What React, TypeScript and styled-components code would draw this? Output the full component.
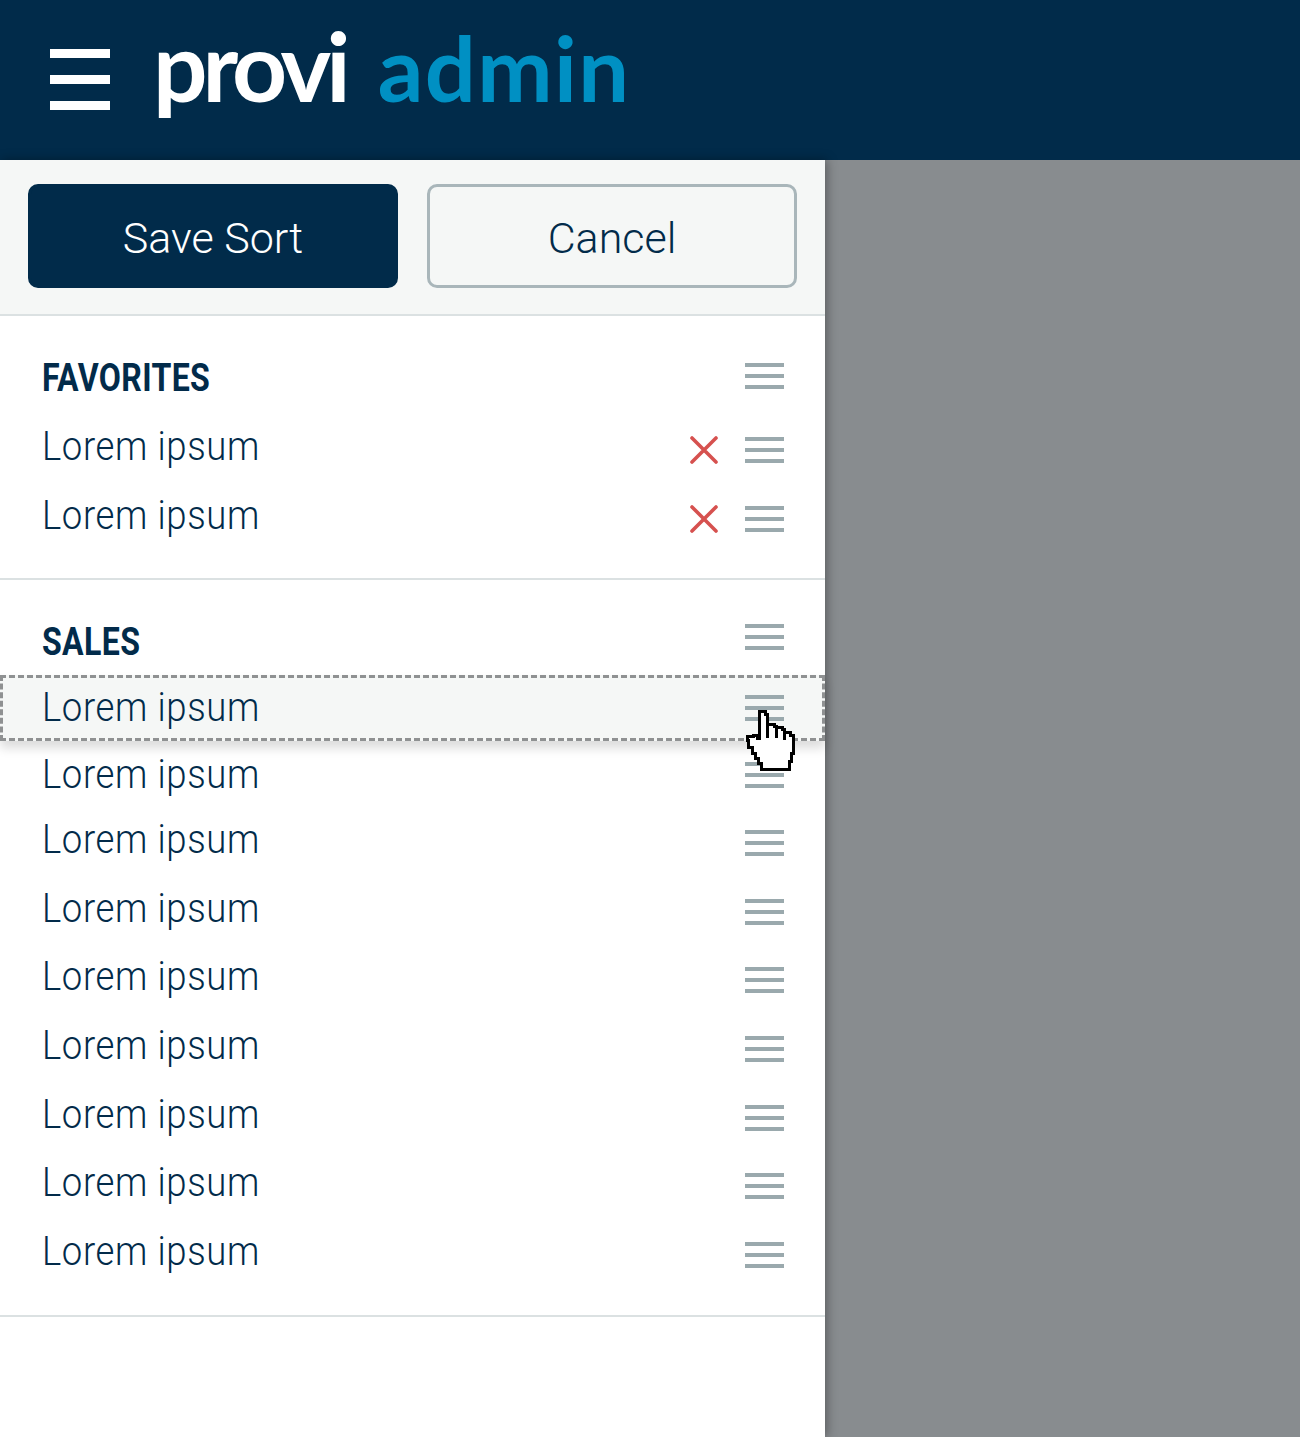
import React from 'react';
import { styled, createGlobalStyle } from 'styled-components';

const GlobalStyle = createGlobalStyle`
  html, body {
    margin: 0;
    padding: 0;
    background: #888c8f;
  }
  * {
    box-sizing: border-box;
  }
`;

const Page = styled.div`
  width: 1300px;
  height: 1437px;
  overflow: hidden;
  display: flex;
  flex-direction: column;
  font-family: 'Roboto', sans-serif;
  color: #022b4a;
`;

const Header = styled.header`
  height: 160px;
  flex: none;
  display: flex;
  align-items: flex-start;
  padding: 49px 0 0 50px;
  background: #012b4a;
`;

const Burger = styled.div`
  width: 60px;
  height: 61px;
  display: flex;
  flex-direction: column;
  justify-content: space-between;
  flex: none;
`;

const BurgerBar = styled.span`
  display: block;
  height: 9px;
  background: #fff;
`;

const Logo = styled.div`
  display: flex;
  align-items: baseline;
  margin: -44px 0 0 43px;
  font-family: 'Lato', sans-serif;
  line-height: 120px;
`;

const LogoName = styled.span`
  font-size: 96px;
  font-weight: 700;
  letter-spacing: -5px;
  color: #fff;
`;

const LogoSuffix = styled.span`
  margin-left: 32px;
  font-size: 90px;
  font-weight: 700;
  letter-spacing: 1.4px;
  color: #0090c3;
`;

const Panel = styled.aside`
  width: 825px;
  flex: 1;
  background: #fff;
  box-shadow: 2px 0 10px rgba(0, 0, 0, 0.35);
`;

const Actions = styled.div`
  height: 156px;
  display: flex;
  gap: 29px;
  padding: 24px 28px 26px 28px;
  background: #f5f7f6;
  border-bottom: 2px solid #dbe1e2;
`;

const Button = styled.button<{ $primary?: boolean }>`
  flex: 1;
  height: 104px;
  padding: 4px 0 0;
  border-radius: 10px;
  border: 3px solid ${(p) => (p.$primary ? '#012b4a' : '#a9b6ba')};
  background: ${(p) => (p.$primary ? '#012b4a' : 'transparent')};
  color: ${(p) => (p.$primary ? '#fff' : '#022b4a')};
  font-family: inherit;
  font-size: 43px;
  font-weight: 300;
`;

const Section = styled.section<{ $top: number; $bottom: number }>`
  padding: ${(p) => p.$top}px 0 ${(p) => p.$bottom}px;
  border-bottom: 2px solid #dbe1e2;
`;

const Heading = styled.div`
  height: 73.7px;
  padding: 0 41px 5.7px 42px;
  display: flex;
  align-items: center;
  justify-content: space-between;
`;

const HeadingText = styled.h2<{ $drop: number }>`
  margin: ${(p) => p.$drop}px 0 0;
  font-size: 38px;
  font-weight: 700;
  letter-spacing: 0.4px;
  line-height: 44px;
  text-transform: uppercase;
  transform: scaleX(0.845);
  transform-origin: left center;
`;

type RowVariant = 'normal' | 'dragging' | 'displaced';

const Row = styled.div<{ $variant: RowVariant }>`
  position: relative;
  height: ${(p) => (p.$variant === 'normal' ? '68.6px' : p.$variant === 'dragging' ? '66px' : '68px')};
  margin-top: ${(p) => (p.$variant === 'dragging' ? '-1.7px' : '0')};
  padding: 0 41px 0 42px;
  display: flex;
  align-items: center;
  gap: 27px;
  ${(p) =>
    p.$variant === 'dragging' &&
    `
    padding: 0 38px 0 39px;
    z-index: 1;
    background: #f5f7f6;
    border: 3px dashed #8f9192;
    box-shadow: 0 7px 10px rgba(0, 0, 0, 0.14);
  `}
`;

const RowLabelWrap = styled.div<{ $lifted: boolean }>`
  flex: 1;
  padding-bottom: ${(p) => (p.$lifted ? '8px' : '2px')};
`;

const RowLabel = styled.span`
  display: inline-block;
  font-size: 41px;
  font-weight: 300;
  letter-spacing: 0.7px;
  transform: scaleX(0.89);
  transform-origin: left center;
`;

const HandleSvg = styled.svg`
  display: block;
  flex: none;
  width: 39px;
  height: 26px;
`;

const RemoveSvg = styled.svg`
  display: block;
  flex: none;
  width: 28px;
  height: 28px;
`;

const HandCursor = styled.svg`
  position: absolute;
  left: 741px;
  top: 31px;
  width: 52px;
  height: 64px;
  z-index: 2;
  shape-rendering: crispEdges;
`;

const DragHandle = () => (
  <HandleSvg viewBox="0 0 39 26">
    <rect y="0" width="39" height="4" fill="#9aa9ad" />
    <rect y="11" width="39" height="4" fill="#9aa9ad" />
    <rect y="22" width="39" height="4" fill="#9aa9ad" />
  </HandleSvg>
);

const RemoveIcon = () => (
  <RemoveSvg viewBox="0 0 28 28">
    <path d="M2 2 L26 26 M26 2 L2 26" stroke="#d6514f" strokeWidth="3.6" strokeLinecap="round" />
  </RemoveSvg>
);

const Hand = () => (
  <HandCursor viewBox="0 0 52 64">
    <path
      d="M15 2 H21 V5 H23 V15 H30 V17 H32 V18 H38 V20 H40 V23 H46 V26 H49 V44 H47 V52 H45 V60 H17 V54 H14 V49 H11 V44 H8 V38 H4 V31 H3 V27 H9 V26 H13 V29 H15 Z"
      fill="#fff"
      stroke="#000"
      strokeWidth="3"
    />
    <path d="M23 15 V29 M32 18 V29 M40 23 V31" fill="none" stroke="#000" strokeWidth="3" />
  </HandCursor>
);

const ItemRow = ({
  variant = 'normal',
  removable = false,
  children,
}: {
  variant?: RowVariant;
  removable?: boolean;
  children?: React.ReactNode;
}) => (
  <Row $variant={variant}>
    <RowLabelWrap $lifted={variant === 'normal'}>
      <RowLabel>Lorem ipsum</RowLabel>
    </RowLabelWrap>
    {removable && <RemoveIcon />}
    <DragHandle />
    {children}
  </Row>
);

export default function App() {
  return (
    <Page>
      <GlobalStyle />
      <Header>
        <Burger>
          <BurgerBar />
          <BurgerBar />
          <BurgerBar />
        </Burger>
        <Logo>
          <LogoName>provi</LogoName>
          <LogoSuffix>admin</LogoSuffix>
        </Logo>
      </Header>
      <Panel>
        <Actions>
          <Button $primary>Save Sort</Button>
          <Button>Cancel</Button>
        </Actions>
        <Section $top={26} $bottom={25}>
          <Heading>
            <HeadingText $drop={4}>Favorites</HeadingText>
            <DragHandle />
          </Heading>
          <ItemRow removable />
          <ItemRow removable />
        </Section>
        <Section $top={23} $bottom={26}>
          <Heading>
            <HeadingText $drop={10}>Sales</HeadingText>
            <DragHandle />
          </Heading>
          <ItemRow variant="dragging">
            <Hand />
          </ItemRow>
          <ItemRow variant="displaced" />
          {Array.from({ length: 7 }, (_, i) => (
            <ItemRow key={i} />
          ))}
        </Section>
      </Panel>
    </Page>
  );
}
